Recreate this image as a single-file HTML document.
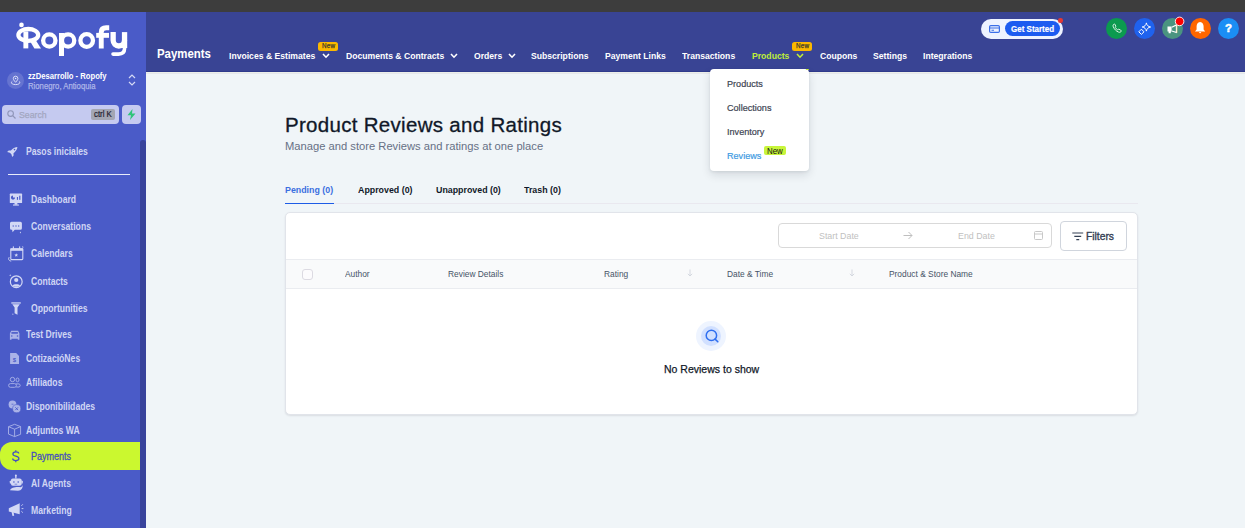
<!DOCTYPE html>
<html><head><meta charset="utf-8"><style>
html,body{margin:0;padding:0;width:1245px;height:528px;overflow:hidden;background:#f0f5f8;}
body{position:relative;font-family:"Liberation Sans",sans-serif;}
.t{position:absolute;white-space:nowrap;}
svg{overflow:visible}
</style></head><body>
<div style="position:absolute;left:0px;top:0px;width:1245px;height:12px;background:#3d3d3d"></div>
<div style="position:absolute;left:0px;top:12px;width:146px;height:516px;background:#4a5bc8"></div>
<div style="position:absolute;left:146px;top:12px;width:1099px;height:60px;background:#394494;border-bottom:1px solid #2f3b8c;box-sizing:border-box"></div>
<div style="position:absolute;left:146px;top:72px;width:1099px;height:456px;background:#f0f5f8"></div>
<div style="position:absolute;left:146px;top:72px;width:1099px;height:1px;background:#eceee9"></div>
<div style="position:absolute;left:146px;top:73px;width:1099px;height:1px;background:#e5e8ec"></div>
<div style="position:absolute;left:140px;top:140px;width:6px;height:388px;background:#39449c;border-radius:3px 3px 0 0"></div>
<svg style="position:absolute;left:0px;top:12px" width="146" height="50" viewBox="0 12 146 50"><g fill="none" stroke="#fff">
<circle cx="21.5" cy="24.9" r="2.3" fill="#fff" stroke="none"/>
<ellipse cx="28.3" cy="34.9" rx="9.9" ry="5.9" stroke-width="4.3"/>
<path d="M25.85 31.4 V48.4" stroke-width="4.9"/>
<path d="M29.6 40.6 L35.6 40.0 L41 48.4 L34.4 48.4 Z" fill="#fff" stroke="none"/>
<circle cx="49.3" cy="40.5" r="6.15" stroke-width="4.3"/>
<circle cx="68.1" cy="40.5" r="6.15" stroke-width="4.3"/>
<path d="M61.5 33 V56" stroke-width="5"/>
<circle cx="86.7" cy="40.5" r="6.3" stroke-width="4.3"/>
<path d="M101.25 48.4 V32.2 C101.25 29.2 103 27.75 106.2 27.75 H109.2" stroke-width="4.9"/>
<path d="M96.2 35.35 H109" stroke-width="4.9"/>
<path d="M113.15 32.1 V40.3 A5.7 5.7 0 0 0 124.55 40.3" stroke-width="5.3"/>
<path d="M124.55 44 V48.6 C124.55 52.4 122.2 54.1 118.5 54.1 H113" stroke-width="3.6" stroke-linecap="round"/><path d="M124.55 32.1 V48" stroke-width="5.3"/>
</g></svg>
<div style="position:absolute;left:7px;top:72px;width:17px;height:17px;background:rgba(255,255,255,0.15);border-radius:50%"></div>
<div class="t" style="left:28px;top:70.86px;font-size:8.6px;line-height:10.32px;font-weight:700;color:#fff;transform:scaleX(0.89);transform-origin:0 0;">zzDesarrollo - Ropofy</div>
<div class="t" style="left:28px;top:80.66px;font-size:8.6px;line-height:10.32px;font-weight:400;color:#aeb6e8;transform:scaleX(0.9);transform-origin:0 0;-webkit-text-stroke:0.25px #aeb6e8">Rionegro, Antioquia</div>
<svg style="position:absolute;left:128px;top:74px" width="8" height="12" viewBox="0 0 8 12"><path d="M1 4 L4 1 L7 4 M1 8 L4 11 L7 8" stroke="#d5d9f5" stroke-width="1.2" fill="none"/></svg>
<div style="position:absolute;left:2px;top:105px;width:117px;height:19px;background:#c5caf0;border-radius:4px"></div>
<svg style="position:absolute;left:7px;top:110px" width="9" height="9" viewBox="0 0 9 9"><circle cx="3.6" cy="3.6" r="2.8" stroke="#8f95b8" stroke-width="1.1" fill="none"/><path d="M5.7 5.7 L8.5 8.5" stroke="#8f95b8" stroke-width="1.2"/></svg>
<div class="t" style="left:19.3px;top:108.61px;font-size:9.5px;line-height:11.4px;font-weight:400;color:#a2a6c0;transform:scaleX(0.92);transform-origin:0 0;-webkit-text-stroke:0.25px #a2a6c0">Search</div>
<div style="position:absolute;left:91px;top:109px;width:24px;height:11px;background:#a3a6b3;border-radius:2px"></div>
<div class="t" style="left:93.6px;top:109.45px;font-size:8.5px;line-height:10.2px;font-weight:400;color:#1f2030;transform:scaleX(0.92);transform-origin:0 0;-webkit-text-stroke:0.2px #1f2030">ctrl K</div>
<div style="position:absolute;left:122px;top:105px;width:19px;height:19px;background:#c5caf0;border-radius:4px"></div>
<svg style="position:absolute;left:127px;top:109px" width="9" height="11" viewBox="0 0 9 11"><path d="M5.5 0 L0.5 6.3 L4 6.3 L3 11 L8.5 4.5 L5 4.5 Z" fill="#2fc47a"/></svg>
<div class="t" style="left:26.3px;top:145.63px;font-size:10px;line-height:12.0px;font-weight:700;color:#d0d6f4;transform:scaleX(0.863);transform-origin:0 0;">Pasos iniciales</div>
<div class="t" style="left:30.9px;top:193.73px;font-size:10px;line-height:12.0px;font-weight:700;color:#d0d6f4;transform:scaleX(0.863);transform-origin:0 0;">Dashboard</div>
<div class="t" style="left:30.8px;top:220.63px;font-size:10px;line-height:12.0px;font-weight:700;color:#d0d6f4;transform:scaleX(0.863);transform-origin:0 0;">Conversations</div>
<div class="t" style="left:30.8px;top:248.43px;font-size:10px;line-height:12.0px;font-weight:700;color:#d0d6f4;transform:scaleX(0.863);transform-origin:0 0;">Calendars</div>
<div class="t" style="left:30.8px;top:275.74px;font-size:10px;line-height:12.0px;font-weight:700;color:#d0d6f4;transform:scaleX(0.863);transform-origin:0 0;">Contacts</div>
<div class="t" style="left:30.8px;top:302.54px;font-size:10px;line-height:12.0px;font-weight:700;color:#d0d6f4;transform:scaleX(0.863);transform-origin:0 0;">Opportunities</div>
<div class="t" style="left:26.0px;top:328.94px;font-size:10px;line-height:12.0px;font-weight:700;color:#d0d6f4;transform:scaleX(0.863);transform-origin:0 0;">Test Drives</div>
<div class="t" style="left:26.0px;top:353.04px;font-size:10px;line-height:12.0px;font-weight:700;color:#d0d6f4;transform:scaleX(0.863);transform-origin:0 0;">CotizacióNes</div>
<div class="t" style="left:26.0px;top:377.13px;font-size:10px;line-height:12.0px;font-weight:700;color:#d0d6f4;transform:scaleX(0.863);transform-origin:0 0;">Afiliados</div>
<div class="t" style="left:26.0px;top:400.94px;font-size:10px;line-height:12.0px;font-weight:700;color:#d0d6f4;transform:scaleX(0.863);transform-origin:0 0;">Disponibilidades</div>
<div class="t" style="left:26.0px;top:424.84px;font-size:10px;line-height:12.0px;font-weight:700;color:#d0d6f4;transform:scaleX(0.863);transform-origin:0 0;">Adjuntos WA</div>
<div class="t" style="left:31px;top:477.63px;font-size:10px;line-height:12.0px;font-weight:700;color:#d0d6f4;transform:scaleX(0.863);transform-origin:0 0;">AI Agents</div>
<div class="t" style="left:31px;top:504.64px;font-size:10px;line-height:12.0px;font-weight:700;color:#d0d6f4;transform:scaleX(0.863);transform-origin:0 0;">Marketing</div>
<div style="position:absolute;left:8px;top:174px;width:122px;height:1px;background:#e8ebfa"></div>
<div style="position:absolute;left:0px;top:442px;width:140px;height:28px;background:#cbf82f;border-radius:12px 0 0 12px"></div>
<div class="t" style="left:31.2px;top:450.55px;font-size:10.2px;line-height:12.24px;font-weight:400;color:#4450bd;transform:scaleX(0.885);transform-origin:0 0;-webkit-text-stroke:0.3px #4450bd">Payments</div>
<div class="t" style="left:157px;top:45.71px;font-size:13.2px;line-height:15.84px;font-weight:700;color:#fff;transform:scaleX(0.866);transform-origin:0 0;">Payments</div>
<div class="t" style="left:229px;top:49.92px;font-size:9.8px;line-height:11.76px;font-weight:700;color:#ffffff;transform:scaleX(0.88);transform-origin:0 0;">Invoices &amp; Estimates</div>
<div class="t" style="left:345.8px;top:49.92px;font-size:9.8px;line-height:11.76px;font-weight:700;color:#ffffff;transform:scaleX(0.88);transform-origin:0 0;">Documents &amp; Contracts</div>
<div class="t" style="left:474px;top:49.92px;font-size:9.8px;line-height:11.76px;font-weight:700;color:#ffffff;transform:scaleX(0.88);transform-origin:0 0;">Orders</div>
<div class="t" style="left:531.3px;top:49.92px;font-size:9.8px;line-height:11.76px;font-weight:700;color:#ffffff;transform:scaleX(0.88);transform-origin:0 0;">Subscriptions</div>
<div class="t" style="left:605px;top:49.92px;font-size:9.8px;line-height:11.76px;font-weight:700;color:#ffffff;transform:scaleX(0.88);transform-origin:0 0;">Payment Links</div>
<div class="t" style="left:682.3px;top:49.92px;font-size:9.8px;line-height:11.76px;font-weight:700;color:#ffffff;transform:scaleX(0.88);transform-origin:0 0;">Transactions</div>
<div class="t" style="left:752.2px;top:49.92px;font-size:9.8px;line-height:11.76px;font-weight:700;color:#c0ee38;transform:scaleX(0.88);transform-origin:0 0;">Products</div>
<div class="t" style="left:820px;top:49.92px;font-size:9.8px;line-height:11.76px;font-weight:700;color:#ffffff;transform:scaleX(0.88);transform-origin:0 0;">Coupons</div>
<div class="t" style="left:872.6px;top:49.92px;font-size:9.8px;line-height:11.76px;font-weight:700;color:#ffffff;transform:scaleX(0.88);transform-origin:0 0;">Settings</div>
<div class="t" style="left:923.2px;top:49.92px;font-size:9.8px;line-height:11.76px;font-weight:700;color:#ffffff;transform:scaleX(0.88);transform-origin:0 0;">Integrations</div>
<svg style="position:absolute;left:321.5px;top:53px" width="8" height="6" viewBox="0 0 8 6"><path d="M1 1 L4 4.2 L7 1" stroke="#fff" stroke-width="1.6" fill="none"/></svg>
<svg style="position:absolute;left:450.4px;top:53px" width="8" height="6" viewBox="0 0 8 6"><path d="M1 1 L4 4.2 L7 1" stroke="#fff" stroke-width="1.6" fill="none"/></svg>
<svg style="position:absolute;left:507.7px;top:53px" width="8" height="6" viewBox="0 0 8 6"><path d="M1 1 L4 4.2 L7 1" stroke="#fff" stroke-width="1.6" fill="none"/></svg>
<svg style="position:absolute;left:795.6px;top:53px" width="8" height="6" viewBox="0 0 8 6"><path d="M1 1 L4 4.2 L7 1" stroke="#c0ee38" stroke-width="1.6" fill="none"/></svg>
<div style="position:absolute;left:318px;top:42px;width:20px;height:9px;background:#fbb800;border-radius:2.5px"></div>
<div class="t" style="left:321.9px;top:41.85px;font-size:6.6px;line-height:7.92px;font-weight:400;color:#3b3a2e;transform:scaleX(0.95);transform-origin:0 0;letter-spacing:0.2px;-webkit-text-stroke:0.25px #3b3a2e">New</div>
<div style="position:absolute;left:792.1px;top:42.1px;width:19.7px;height:8.8px;background:#fbb800;border-radius:2.5px"></div>
<div class="t" style="left:795.85px;top:41.75px;font-size:6.6px;line-height:7.92px;font-weight:400;color:#3b3a2e;transform:scaleX(0.95);transform-origin:0 0;letter-spacing:0.2px;-webkit-text-stroke:0.25px #3b3a2e">New</div>
<div style="position:absolute;left:981px;top:18.7px;width:82px;height:20.3px;background:#eef3ff;border-radius:10.5px"></div>
<div style="position:absolute;left:1005px;top:20.6px;width:55px;height:15.8px;background:#1d5cf0;border-radius:8px"></div>
<div class="t" style="left:1010.6px;top:23.5px;font-size:9.3px;line-height:11.16px;font-weight:700;color:#fff;transform:scaleX(0.86);transform-origin:0 0;-webkit-text-stroke:0.2px #fff">Get Started</div>
<svg style="position:absolute;left:989px;top:25px" width="11" height="8" viewBox="0 0 11 8"><rect x="0.6" y="0.6" width="9.8" height="6.8" rx="1.2" stroke="#3b6fe8" stroke-width="1.2" fill="none"/><path d="M1 3 H10 M2.5 5.2 H5" stroke="#3b6fe8" stroke-width="1.1"/></svg>
<div style="position:absolute;left:1058px;top:18px;width:4.6px;height:4.6px;background:#e53935;border-radius:50%"></div>
<div style="position:absolute;left:1106px;top:18px;width:21px;height:21px;background:#0b9a4f;border-radius:50%"></div>
<div style="position:absolute;left:1134px;top:18px;width:21px;height:21px;background:#1f62ee;border-radius:50%"></div>
<div style="position:absolute;left:1162px;top:18px;width:21px;height:21px;background:#4a9480;border-radius:50%"></div>
<div style="position:absolute;left:1190px;top:18px;width:21px;height:21px;background:#ff6600;border-radius:50%"></div>
<div style="position:absolute;left:1218px;top:18px;width:21px;height:21px;background:#1b8ef5;border-radius:50%"></div>
<svg style="position:absolute;left:1100px;top:12px" width="145" height="35" viewBox="1100 12 145 35">
<path d="M1114.2 24.0 C1113.2 24.4 1112.7 25.6 1113.3 26.9 C1114.4 29.3 1116.2 31.2 1118.6 32.1 C1119.8 32.6 1120.8 32.2 1121.1 31.3 C1121.3 30.6 1120.8 30.1 1120.2 29.8 L1119.0 29.3 C1118.5 29.1 1118.1 29.4 1117.7 29.8 C1116.6 29.2 1115.8 28.4 1115.3 27.4 C1115.7 27.0 1115.9 26.5 1115.7 26.0 L1115.2 24.8 C1115.0 24.2 1114.6 23.9 1114.2 24.0 Z" fill="none" stroke="#e6f5ec" stroke-width="0.95"/>
<path d="M1146.4 22.9 C1146.8 25.3 1148.2 26.6 1150.6 27 C1148.2 27.4 1146.8 28.7 1146.4 31.1 C1146.0 28.7 1144.6 27.4 1142.2 27 C1144.6 26.6 1146.0 25.3 1146.4 22.9 Z" fill="none" stroke="#fff" stroke-width="1"/>
<path d="M1141.4 29.2 L1144.0 31.8 L1141.4 34.4 L1138.8 31.8 Z" fill="none" stroke="#fff" stroke-width="1"/>
<path d="M1167.5 26.6 H1171.6 V31.6 H1170.8 V33.2 H1168.6 V31.6 H1167.5 Z" fill="#fff"/>
<path d="M1171.8 27.2 L1176.4 24.9 V32.5 L1171.8 30.9" fill="none" stroke="#fff" stroke-width="1.1"/>
<path d="M1177.1 24.6 V32.8" stroke="#f0d77a" stroke-width="0.6"/>
<circle cx="1179.6" cy="21.4" r="4.3" fill="#ff0000" stroke="#fff" stroke-width="0.9"/>
<path d="M1200.1 22.0 C1197.6 22.4 1196.6 24.3 1196.6 26.6 V29.6 L1195.0 31.4 H1205.2 L1203.6 29.6 V26.6 C1203.6 24.3 1202.6 22.4 1200.1 22.0 Z" fill="#fff"/>
<path d="M1198.8 32.0 H1201.4 L1200.1 33.4 Z" fill="#fff"/>
</svg>
<div class="t" style="left:1224.9px;top:22.42px;font-size:11.5px;line-height:13.8px;font-weight:700;color:#fff;-webkit-text-stroke:0.5px #fff">?</div>
<div class="t" style="left:285px;top:112.9px;font-size:20.5px;line-height:24.6px;font-weight:400;color:#101828;letter-spacing:0.3px;-webkit-text-stroke:0.3px #101828">Product Reviews and Ratings</div>
<div class="t" style="left:285.3px;top:140.12px;font-size:11.5px;line-height:13.8px;font-weight:400;color:#667085;transform:scaleX(0.973);transform-origin:0 0;">Manage and store Reviews and ratings at one place</div>
<div class="t" style="left:285px;top:184.01px;font-size:9.5px;line-height:11.4px;font-weight:600;color:#3b6fe0;transform:scaleX(0.93);transform-origin:0 0;">Pending (0)</div>
<div class="t" style="left:357.7px;top:184.01px;font-size:9.5px;line-height:11.4px;font-weight:700;color:#101828;transform:scaleX(0.93);transform-origin:0 0;">Approved (0)</div>
<div class="t" style="left:435.9px;top:184.01px;font-size:9.5px;line-height:11.4px;font-weight:700;color:#101828;transform:scaleX(0.93);transform-origin:0 0;">Unapproved (0)</div>
<div class="t" style="left:524.4px;top:184.01px;font-size:9.5px;line-height:11.4px;font-weight:700;color:#101828;transform:scaleX(0.93);transform-origin:0 0;">Trash (0)</div>
<div style="position:absolute;left:285px;top:203px;width:853px;height:1px;background:#e9e8ef"></div>
<div style="position:absolute;left:285px;top:203px;width:49px;height:1.3px;background:#1d5ce6"></div>
<div style="position:absolute;left:285px;top:212.3px;width:852.8px;height:202.7px;background:#fff;border:1px solid #e1e4ea;border-radius:5px;box-sizing:border-box;box-shadow:0 1px 2px rgba(16,24,40,0.10)"></div>
<div style="position:absolute;left:777.5px;top:223.3px;width:274.5px;height:25.2px;background:#fff;border:1px solid #d9d9d9;border-radius:4px;box-sizing:border-box"></div>
<div class="t" style="left:818.6px;top:230.01px;font-size:9.5px;line-height:11.4px;font-weight:400;color:#bfbfbf;transform:scaleX(0.93);transform-origin:0 0;">Start Date</div>
<div class="t" style="left:957.8px;top:230.01px;font-size:9.5px;line-height:11.4px;font-weight:400;color:#bfbfbf;transform:scaleX(0.93);transform-origin:0 0;">End Date</div>
<svg style="position:absolute;left:903px;top:231px" width="10" height="9" viewBox="0 0 10 9"><path d="M0.5 4.5 H9 M5.5 1 L9 4.5 L5.5 8" stroke="#bfbfbf" stroke-width="1" fill="none"/></svg>
<svg style="position:absolute;left:1034px;top:231px" width="9" height="9" viewBox="0 0 9 9"><rect x="0.5" y="0.5" width="8" height="8" rx="1" stroke="#c8c8c8" stroke-width="1" fill="none"/><path d="M0.5 3 H8.5" stroke="#c8c8c8"/></svg>
<div style="position:absolute;left:1060px;top:221px;width:66.6px;height:29.6px;background:#fff;border:1px solid #d0d5dd;border-radius:4px;box-sizing:border-box"></div>
<svg style="position:absolute;left:1071.5px;top:232px" width="12" height="9" viewBox="0 0 12 9"><path d="M0.3 1 H11.2 M2.3 4.3 H9.2 M4.3 7.6 H7.2" stroke="#344054" stroke-width="1.2"/></svg>
<div class="t" style="left:1086.4px;top:230.06px;font-size:10.5px;line-height:12.6px;font-weight:400;color:#344054;transform:scaleX(0.98);transform-origin:0 0;-webkit-text-stroke:0.35px #344054">Filters</div>
<div style="position:absolute;left:286px;top:259px;width:850.8px;height:29.5px;background:#f9fafb;border-top:1px solid #eaecf0;border-bottom:1px solid #eaecf0;box-sizing:border-box"></div>
<div style="position:absolute;left:302px;top:268.5px;width:11px;height:11px;background:#fcfbfd;border:1px solid #dcdae2;border-radius:3px;box-sizing:border-box"></div>
<div class="t" style="left:344.8px;top:269.48px;font-size:9px;line-height:10.8px;font-weight:400;color:#475467;transform:scaleX(0.93);transform-origin:0 0;">Author</div>
<div class="t" style="left:448px;top:269.48px;font-size:9px;line-height:10.8px;font-weight:400;color:#475467;transform:scaleX(0.93);transform-origin:0 0;">Review Details</div>
<div class="t" style="left:604.2px;top:269.48px;font-size:9px;line-height:10.8px;font-weight:400;color:#475467;transform:scaleX(0.93);transform-origin:0 0;">Rating</div>
<div class="t" style="left:727px;top:269.48px;font-size:9px;line-height:10.8px;font-weight:400;color:#475467;transform:scaleX(0.93);transform-origin:0 0;">Date &amp; Time</div>
<div class="t" style="left:889.1px;top:269.48px;font-size:9px;line-height:10.8px;font-weight:400;color:#475467;transform:scaleX(0.93);transform-origin:0 0;">Product &amp; Store Name</div>
<svg style="position:absolute;left:687px;top:269px" width="6" height="8" viewBox="0 0 6 8"><path d="M3 0.5 V7 M0.8 4.8 L3 7 L5.2 4.8" stroke="#d0d5dd" stroke-width="0.9" fill="none"/></svg>
<svg style="position:absolute;left:849px;top:269px" width="6" height="8" viewBox="0 0 6 8"><path d="M3 0.5 V7 M0.8 4.8 L3 7 L5.2 4.8" stroke="#d0d5dd" stroke-width="0.9" fill="none"/></svg>
<div style="position:absolute;left:696px;top:321px;width:30px;height:30px;background:#eef4ff;border-radius:50%"></div>
<div style="position:absolute;left:700.8px;top:325.8px;width:20.4px;height:20.4px;background:#d1e0ff;border-radius:50%"></div>
<svg style="position:absolute;left:704.5px;top:329.3px" width="15" height="15" viewBox="0 0 15 15"><circle cx="6.4" cy="6.4" r="5.2" stroke="#2f6ff0" stroke-width="1.5" fill="none"/><path d="M10.1 10.1 L12.8 12.8" stroke="#2f6ff0" stroke-width="1.5" stroke-linecap="round"/></svg>
<div class="t" style="left:664.3px;top:362.5px;font-size:11.3px;line-height:13.56px;font-weight:400;color:#101828;transform:scaleX(0.93);transform-origin:0 0;-webkit-text-stroke:0.25px #101828">No Reviews to show</div>
<div style="position:absolute;left:709.7px;top:68.8px;width:99.4px;height:102.2px;background:#fff;border-radius:4px;box-shadow:0 4px 10px rgba(16,24,40,0.12),0 1px 3px rgba(16,24,40,0.08)"></div>
<div style="position:absolute;left:806.3px;top:68.8px;width:2.6px;height:1.6px;background:#c0ee38;border-radius:0 2px 0 0"></div>
<div class="t" style="left:726.6px;top:78.4px;font-size:9.4px;line-height:11.28px;font-weight:400;color:#3d4452;transform:scaleX(0.97);transform-origin:0 0;-webkit-text-stroke:0.2px #3d4452">Products</div>
<div class="t" style="left:726.6px;top:102.4px;font-size:9.4px;line-height:11.28px;font-weight:400;color:#3d4452;transform:scaleX(0.97);transform-origin:0 0;-webkit-text-stroke:0.2px #3d4452">Collections</div>
<div class="t" style="left:726.6px;top:126.4px;font-size:9.4px;line-height:11.28px;font-weight:400;color:#3d4452;transform:scaleX(0.97);transform-origin:0 0;-webkit-text-stroke:0.2px #3d4452">Inventory</div>
<div class="t" style="left:726.6px;top:150.4px;font-size:9.4px;line-height:11.28px;font-weight:400;color:#3d9ae2;transform:scaleX(0.97);transform-origin:0 0;-webkit-text-stroke:0.2px #3d9ae2">Reviews</div>
<div style="position:absolute;left:764.3px;top:145.9px;width:21.6px;height:9.6px;background:#c8f53a;border-radius:2px"></div>
<div class="t" style="left:766.5px;top:145.95px;font-size:8.5px;line-height:10.2px;font-weight:500;color:#111;transform:scaleX(0.93);transform-origin:0 0;">New</div>
<svg style="position:absolute;left:0;top:0" width="146" height="528" viewBox="0 0 146 528">
<!-- rocket -->
<path d="M17.4 146.9 C15.4 147.1 13.4 148 11.9 149.5 L10.9 150.6 L8.7 150.5 L7.1 151.9 L9.9 152.7 L11.4 154.3 L12.2 157.0 L13.6 155.5 L13.5 153.3 L14.6 152.2 C16.2 150.7 17.2 148.8 17.4 146.9 Z" fill="#d3d8f5"/>
<circle cx="14.5" cy="149.6" r="0.8" fill="#4a5bc8"/>
<!-- dashboard -->
<rect x="9.8" y="193.6" width="12.3" height="9.5" rx="0.6" fill="#d3d8f5"/>
<rect x="14.5" y="203" width="2.9" height="1.7" fill="#d3d8f5"/>
<rect x="13" y="204.5" width="5.9" height="1.1" fill="#d3d8f5"/>
<path d="M13 195.5 A2.1 2.1 0 1 0 15.1 197.6 L13 197.6 Z" fill="#4a5bc8"/>
<rect x="16.9" y="197" width="1.1" height="2.8" fill="#4a5bc8"/>
<rect x="19" y="195.7" width="1.5" height="4.1" fill="#4a5bc8" opacity="0.8"/>
<!-- conversations -->
<path d="M11.5 221.8 H20.4 A1.5 1.5 0 0 1 21.9 223.3 V228.2 A1.5 1.5 0 0 1 20.4 229.7 H14.7 L12.6 232.2 L12.1 229.7 H11.5 A1.5 1.5 0 0 1 10 228.2 V223.3 A1.5 1.5 0 0 1 11.5 221.8 Z" fill="#d3d8f5"/>
<circle cx="13.2" cy="226" r="0.65" fill="#4a5bc8"/><circle cx="16" cy="226" r="0.65" fill="#4a5bc8"/><circle cx="18.7" cy="226" r="0.65" fill="#4a5bc8"/>
<path d="M20.4 231.6 L21 232.5 L20.4 233.4 L19.8 232.5 Z" fill="#d3d8f5"/>
<!-- calendar -->
<rect x="10.8" y="248.8" width="12" height="10.8" rx="0.8" fill="none" stroke="#d3d8f5" stroke-width="1.1"/>
<rect x="10.5" y="248.4" width="12.6" height="2.4" fill="#d3d8f5"/>
<rect x="12.8" y="246.3" width="1.1" height="2.8" rx="0.5" fill="#d3d8f5"/><rect x="19.1" y="246.3" width="1.1" height="2.8" rx="0.5" fill="#d3d8f5"/>
<path d="M16.25 253.3 L16.8 254.5 L18.1 254.6 L17.1 255.5 L17.4 256.8 L16.25 256.1 L15.1 256.8 L15.4 255.5 L14.4 254.6 L15.7 254.5 Z" fill="#d3d8f5"/>
<path d="M9.2 257.2 C8.0 258.6 8.6 260.8 11.2 261.2" fill="none" stroke="#d3d8f5" stroke-width="0.9"/>
<path d="M22.5 246.2 L23 247.2 L22.5 248.2" fill="none" stroke="#d3d8f5" stroke-width="0.7"/>
<!-- contacts -->
<circle cx="16.25" cy="281.7" r="5.9" fill="none" stroke="#d3d8f5" stroke-width="1.2"/>
<circle cx="16.25" cy="280" r="2.1" fill="#d3d8f5"/>
<path d="M12.5 285.6 C13.4 283.8 19.1 283.8 20 285.6 C18.9 287.3 13.6 287.3 12.5 285.6 Z" fill="#d3d8f5"/>
<path d="M10.2 274.2 L10.6 275 L11.4 275.2 L10.6 275.5 L10.2 276.3 L9.8 275.5 L9.0 275.2 L9.8 275 Z" fill="#d3d8f5"/>
<!-- funnel -->
<rect x="11.3" y="302.2" width="9.5" height="1.5" fill="#d3d8f5" opacity="0.85"/>
<path d="M12.3 304.3 H19.8 L17.5 307.6 V314.7 L14.6 313.2 V307.6 Z" fill="#d3d8f5"/>
<path d="M12.9 313.2 L13.6 314.5 L12.2 314.8 Z" fill="#d3d8f5"/>
<!-- car -->
<path d="M11.2 330.8 H18.1 L19.4 333.6 V339.8 H17.8 V338.8 H11.5 V339.8 H9.9 V333.6 Z" fill="#aab3e8"/>
<rect x="11.4" y="332.1" width="6.5" height="1.6" fill="#4a5bc8"/>
<circle cx="11.8" cy="336" r="0.8" fill="#4a5bc8"/><circle cx="17.5" cy="336" r="0.8" fill="#4a5bc8"/>
<!-- doc -->
<path d="M10.1 353.1 H16.2 L19 355.9 V363.9 H10.1 Z" fill="#aab3e8"/>
<text x="14.5" y="362" font-size="6" font-weight="700" fill="#4a5bc8" text-anchor="middle" font-family="Liberation Sans">$</text>
<!-- people -->
<circle cx="12.5" cy="379.5" r="2.2" fill="none" stroke="#aab3e8" stroke-width="0.9"/>
<ellipse cx="17.5" cy="379.9" rx="1.5" ry="1.9" fill="none" stroke="#aab3e8" stroke-width="0.9"/>
<rect x="8.6" y="383.6" width="7.8" height="3.7" rx="1.85" fill="none" stroke="#aab3e8" stroke-width="0.9"/>
<path d="M16 383.9 H19 A1.6 1.6 0 0 1 19 387 H16.2" fill="none" stroke="#aab3e8" stroke-width="0.9"/>
<!-- dispon -->
<circle cx="12.5" cy="404.5" r="3.9" fill="#aab3e8"/>
<circle cx="16.7" cy="408.7" r="4.1" fill="#aab3e8" stroke="#4a5bc8" stroke-width="0.6"/>
<path d="M15.3 407.3 L18.1 410.1 M18.1 407.3 L15.3 410.1" stroke="#4a5bc8" stroke-width="0.9"/>
<path d="M11.5 404.2 H13.5" stroke="#4a5bc8" stroke-width="0.7"/>
<!-- cube -->
<path d="M14.6 424.3 L20.6 426.6 V434.3 L14.6 436.6 L8.5 434.1 V426.7 Z M8.5 426.7 L14.6 429.2 L20.6 426.6 M14.6 429.2 V436.6" fill="none" stroke="#aab3e8" stroke-width="0.9" stroke-linejoin="round"/>
<!-- dollar -->
<path d="M18.7 453.6 C18.7 452.2 17.4 451.8 15.8 451.8 C14.0 451.8 12.9 452.6 12.9 454.0 C12.9 457.0 18.9 455.4 18.9 458.5 C18.9 459.9 17.6 460.6 15.8 460.6 C14.0 460.6 12.7 459.9 12.7 458.5 M15.8 450.2 V451.8 M15.8 460.6 V462.2" fill="none" stroke="#4450bd" stroke-width="1.25"/>
<!-- robot -->
<rect x="10.9" y="478.4" width="10.8" height="7.3" rx="2" fill="#d3d8f5"/>
<rect x="15.2" y="475.6" width="1.3" height="2.9" fill="#d3d8f5"/><circle cx="15.85" cy="475.6" r="1" fill="#d3d8f5"/>
<rect x="9.8" y="480.8" width="1.3" height="2.6" rx="0.5" fill="#d3d8f5"/><rect x="21.5" y="480.8" width="1.3" height="2.6" rx="0.5" fill="#d3d8f5"/>
<circle cx="13.9" cy="482" r="0.8" fill="#4a5bc8"/><circle cx="18.2" cy="482" r="0.8" fill="#4a5bc8"/>
<path d="M14.6 484.2 H17.2" stroke="#4a5bc8" stroke-width="0.6"/>
<path d="M10 490.2 C11 487.2 17 486.4 20.5 487.2 C22 486.8 22.7 485.8 22.6 484.5 C23.2 487.5 21.5 490.6 18 490.8 Z" fill="#d3d8f5"/>
<!-- megaphone -->
<path d="M8.8 508.3 L19.7 503.3 V514.2 L8.8 511.6 Z" fill="#d3d8f5"/>
<path d="M11.5 511.8 L12.5 516 L14.2 515.8 L13.6 512.3 Z" fill="#d3d8f5"/>
<path d="M21.4 505.8 L22.8 504.3 M21.6 508.6 H23.4 M21.4 511.3 L22.8 512.6" stroke="#d3d8f5" stroke-width="0.9"/>
<!-- org avatar icon -->
<path d="M15.6 76.2 A2.3 2.3 0 0 1 17.9 78.5 C17.9 80 15.6 82.3 15.6 82.3 C15.6 82.3 13.3 80 13.3 78.5 A2.3 2.3 0 0 1 15.6 76.2 Z" fill="none" stroke="#e5e8fa" stroke-width="0.9"/>
<circle cx="15.6" cy="78.5" r="0.8" fill="#e5e8fa"/>
<path d="M12.2 81.3 C10.8 82.2 11 84.6 15.6 84.6 C20.2 84.6 20.4 82.2 19 81.3" fill="none" stroke="#e5e8fa" stroke-width="0.9"/>
</svg>
</body></html>
